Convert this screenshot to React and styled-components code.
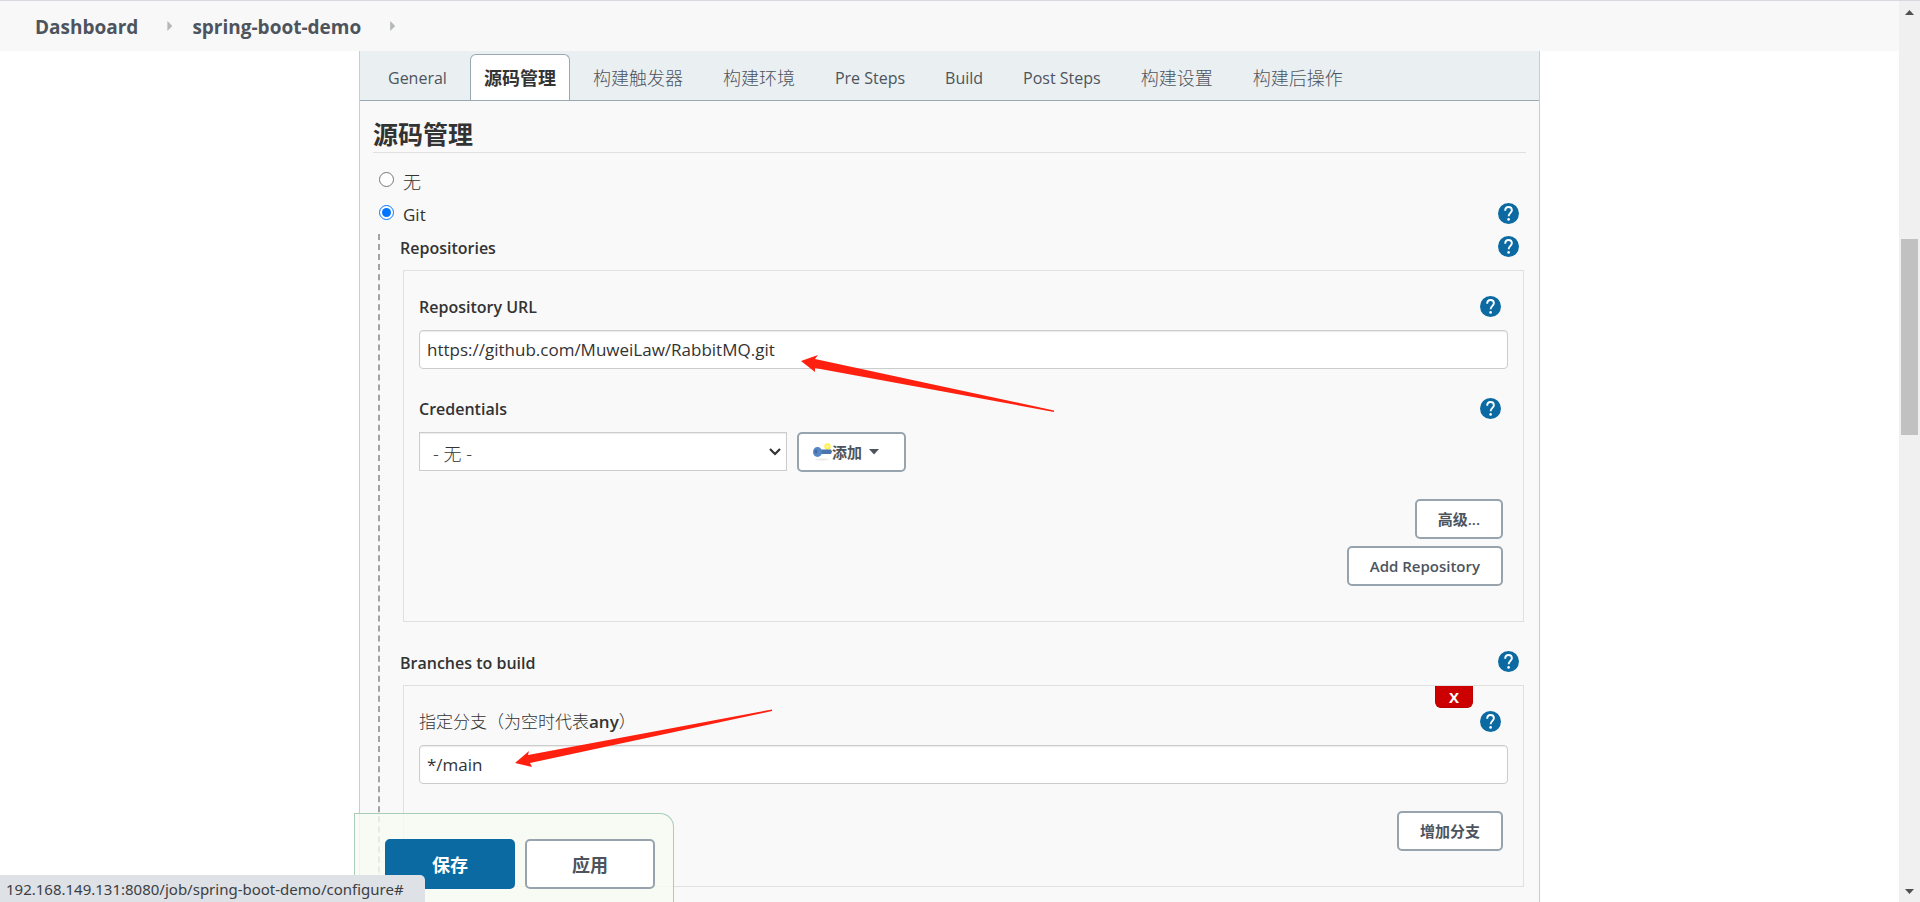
import React from "react";
import styled, { createGlobalStyle } from "styled-components";

const GlobalStyle = createGlobalStyle`
  *, *::before, *::after { box-sizing: border-box; }
  body {
    margin: 0;
    overflow: hidden;
    background: #fff;
    color: #333;
    font: 400 17px/24px "Open Sans", "Noto Sans CJK SC", sans-serif;
  }
  button, input, select { font: inherit; color: inherit; }
`;

const Page = styled.div`
  display: flex;
  height: 100vh;
  overflow: hidden;
`;

const Content = styled.div`
  flex: 1;
  min-width: 0;
  display: flex;
  flex-direction: column;
`;

const Breadcrumbs = styled.nav`
  flex: none;
  display: flex;
  align-items: center;
  height: 51px;
  padding: 2px 35px 0;
  background: #f8f8f8;
  border-top: 1px solid #d8d8de;
`;

const Crumb = styled.a`
  color: #4d545d;
  font-size: 19px;
  font-weight: 700;
  text-decoration: none;
`;

const Chevron = styled.span`
  width: 5px;
  height: 10px;
  margin: 0 20px 2px 29px;
  background: #b5b8ba;
  clip-path: polygon(0 0, 100% 50%, 0 100%);
`;

const Panel = styled.main`
  position: relative;
  flex: 1;
  min-height: 0;
  width: 100%;
  max-width: 1181px;
  margin: 0 auto;
  background: #f9f9f9;
  border: solid #ccc;
  border-width: 0 1px;
`;

const Tabs = styled.nav`
  display: flex;
  align-items: flex-end;
  height: 50px;
  padding-left: 11px;
  background: #eaeff2;
  border-bottom: 1px solid #98a9b4;
`;

const Tab = styled.a`
  height: 46px;
  margin: 0 6px 0 0;
  padding: 0 ${(p) => (p.$active ? 13 : 16)}px;
  border: 1px solid ${(p) => (p.$active ? "#98a9b4" : "transparent")};
  border-bottom: 0;
  border-radius: 6px 6px 0 0;
  background: ${(p) => (p.$active ? "#fff" : "transparent")};
  color: ${(p) => (p.$active ? "#333" : "#4d545d")};
  font-size: ${(p) => (p.$cjk ? 18 : 16)}px;
  font-weight: ${(p) => (p.$active ? 700 : p.$cjk ? 300 : 400)};
  line-height: 46px;
  text-decoration: none;
  white-space: nowrap;
`;

const Section = styled.section`
  padding: 14px 13px 0;
`;

const Title = styled.h2`
  margin: 0 0 11px;
  height: 38px;
  border-bottom: 1px solid #e0e0e0;
  font-size: 25px;
  line-height: 38px;
  font-weight: 700;
`;

const Row = styled.div`
  display: flex;
  align-items: center;
  height: ${(p) => (p.$group ? 25 : 33)}px;
  padding-left: ${(p) => (p.$option ? 6 : 0)}px;
  padding-right: 7px;
`;

const RadioLabel = styled.label`
  display: flex;
  align-items: center;
  gap: 9px;
  margin-right: auto;
  padding-top: 2px;
  font-size: ${(p) => (p.$cjk ? 18 : 17)}px;
  font-weight: ${(p) => (p.$cjk ? 300 : 400)};
`;

const Radio = styled.input`
  width: 15px;
  height: 15px;
  margin: 0 0 5px;
  accent-color: #0075ff;
`;

const FieldName = styled.label`
  margin-right: auto;
  padding-top: 1px;
  font-size: ${(p) => (p.$light ? 17 : 16)}px;
  font-weight: ${(p) => (p.$light ? 300 : 600)};
  b { font-weight: 600; }
`;

const GroupName = styled.span`
  margin-right: auto;
  padding-top: 2px;
  font-size: 16px;
  font-weight: 600;
`;

const HelpButton = styled.button`
  display: block;
  width: 21px;
  height: 21px;
  padding: 0;
  border: 0;
  background: none;
  svg { display: block; }
`;

const Nested = styled.div`
  margin: 4px 0 0 5px;
  padding-left: 20px;
  height: 1000px;
  border-left: 2px dashed #a3a3a3;
`;

const Box = styled.div`
  position: relative;
  margin: 11px 2px 27px 3px;
  padding: 19px 15px 35px;
  border: 1px solid #e0e0e0;
`;

const Field = styled.div`
  margin-bottom: 23px;
`;

const TextBox = styled.input`
  display: block;
  width: 100%;
  height: 39px;
  margin-top: 7px;
  padding: 1px 7px;
  border: 1px solid #ccc;
  border-radius: 4px;
  background: #fff;
  box-shadow: inset 0 1px 1px rgba(0, 0, 0, 0.08);
  outline: 0;
`;

const Inline = styled.div`
  display: flex;
  gap: 10px;
  margin-top: 7px;
`;

const SelectWrap = styled.span`
  position: relative;
  width: 368px;
  svg { position: absolute; right: 5px; top: 14px; pointer-events: none; }
`;

const Select = styled.select`
  width: 100%;
  height: 39px;
  padding: 5px 13px 0;
  appearance: none;
  border: 1px solid #ccc;
  border-radius: 0;
  background: #fff;
  box-shadow: inset 0 1px 1px rgba(0, 0, 0, 0.08);
  font-size: 18px;
  font-weight: 300;
`;

const Button = styled.button`
  display: flex;
  align-items: center;
  justify-content: center;
  height: 40px;
  padding: 0 21px;
  border: 2px solid #98a4ad;
  border-radius: 5px;
  background: #fff;
  color: #4d545d;
  font-size: 15px;
  font-weight: 600;
  white-space: nowrap;
`;

const AddButton = styled(Button)`
  width: 109px;
  justify-content: flex-start;
  padding: 0 13px;
  svg:last-child { margin-left: 7px; }
`;

const Actions = styled.div`
  display: flex;
  flex-direction: column;
  align-items: flex-end;
  gap: 7px;
  padding: 4px 5px 0 0;
`;

const Delete = styled.button`
  position: absolute;
  top: 0;
  right: 50px;
  width: 38px;
  height: 22px;
  padding: 0;
  border: 1px solid #b00;
  border-top: 0;
  border-radius: 0 0 6px 6px;
  background: #c00;
  color: #fff;
  font-size: 15px;
  font-weight: 700;
  line-height: 20px;
`;

const SaveBar = styled.div`
  position: absolute;
  left: -6px;
  bottom: 0;
  display: flex;
  gap: 10px;
  padding: 25px 18px 13px 30px;
  border: 1px solid #a9cdb9;
  border-bottom: 0;
  border-radius: 0 14px 0 0;
  background: rgba(247, 251, 242, 0.8);
`;

const BigButton = styled(Button)`
  width: 130px;
  height: 50px;
  padding-top: 2px;
  font-size: 18px;
  font-weight: 700;
  ${(p) => p.$primary && "background: #0b6aa2; border-color: #0b6aa2; color: #fff;"}
`;

const StatusBar = styled.div`
  position: fixed;
  left: 0;
  bottom: 0;
  height: 27px;
  min-width: 425px;
  padding: 0 10px 0 6px;
  border-radius: 0 5px 0 0;
  background: #dee1e6;
  color: #3c4043;
  font-family: "Noto Sans", sans-serif;
  font-size: 15px;
  line-height: 29px;
`;

const Scrollbar = styled.div`
  flex: none;
  display: flex;
  flex-direction: column;
  align-items: center;
  width: 21px;
  padding: 9px 2px 8px;
  background: #f0f0f0;
  border-top: 1px solid #d8d8de;
  svg { flex: none; }
`;

const Thumb = styled.div`
  width: 17px;
  height: 196px;
  margin: 224px 0 auto;
  background: #c1c1c1;
`;

const Annotations = styled.svg`
  position: absolute;
  left: 0;
  top: 0;
  pointer-events: none;
`;

const Help = ({ about }) => (
  <HelpButton type="button" aria-label={`Help for ${about}`}>
    <svg width="21" height="21" viewBox="0 0 21 21">
      <circle cx="10.5" cy="10.5" r="10.5" fill="#0b6aa2" />
      <path d="M7.2 7.7C7.2 5.5 8.5 4 10.5 4S13.900 5.400 13.900 7.300C13.900 9.700 10.600 10.200 10.600 13.300" fill="none" stroke="#fff" strokeWidth="1.9" />
      <circle cx="10.6" cy="16.4" r="1.3" fill="#fff" />
    </svg>
  </HelpButton>
);

const KeyIcon = () => (
  <svg width="20" height="20" viewBox="0 0 20 20">
    <ellipse cx="10" cy="17.5" rx="7" ry="1.2" fill="#ececec" />
    <circle cx="15.5" cy="4.5" r="3.2" fill="#fff04a" />
    <circle cx="15.5" cy="4.5" r="1.2" fill="#fffbc0" />
    <path d="M8 7.500h11l1 2-1 2.500h-9l-2 .5z" fill="#4a74ad" />
    <ellipse cx="5.500" cy="10" rx="4.500" ry="5" fill="#5686c4" />
    <ellipse cx="4" cy="9.500" rx="1.300" ry="2" fill="#3f689f" />
  </svg>
);

const tabs = [
  { name: "General" },
  { name: "源码管理", cjk: true, active: true },
  { name: "构建触发器", cjk: true },
  { name: "构建环境", cjk: true },
  { name: "Pre Steps" },
  { name: "Build" },
  { name: "Post Steps" },
  { name: "构建设置", cjk: true },
  { name: "构建后操作", cjk: true },
];

export default function App() {
  return (
    <Page>
      <GlobalStyle />
      <Content>
        <Breadcrumbs>
          <Crumb href="#">Dashboard</Crumb>
          <Chevron />
          <Crumb href="#">spring-boot-demo</Crumb>
          <Chevron />
        </Breadcrumbs>
        <Panel>
          <Tabs>
            {tabs.map((t) => (
              <Tab key={t.name} href="#" $active={t.active} $cjk={t.cjk}>{t.name}</Tab>
            ))}
          </Tabs>
          <Section>
            <Title>源码管理</Title>
            <Row $option>
              <RadioLabel $cjk><Radio type="radio" name="scm" />无</RadioLabel>
            </Row>
            <Row $option>
              <RadioLabel><Radio type="radio" name="scm" defaultChecked />Git</RadioLabel>
              <Help about="Git" />
            </Row>
            <Nested>
              <Row $group>
                <GroupName>Repositories</GroupName>
                <Help about="Repositories" />
              </Row>
              <Box>
                <Field>
                  <Row>
                    <FieldName htmlFor="url">Repository URL</FieldName>
                    <Help about="Repository URL" />
                  </Row>
                  <TextBox id="url" defaultValue="https://github.com/MuweiLaw/RabbitMQ.git" />
                </Field>
                <Field>
                  <Row>
                    <FieldName htmlFor="credentials">Credentials</FieldName>
                    <Help about="Credentials" />
                  </Row>
                  <Inline>
                    <SelectWrap>
                      <Select id="credentials"><option>- 无 -</option></Select>
                      <svg width="14" height="12" viewBox="0 0 14 12">
                        <path d="M2 3l5 5 5-5" fill="none" stroke="#333" strokeWidth="2.2" />
                      </svg>
                    </SelectWrap>
                    <AddButton type="button">
                      <KeyIcon />
                      添加
                      <svg width="10" height="6" viewBox="0 0 10 6"><path d="M0 0h10L5 5.500z" fill="#4d545d" /></svg>
                    </AddButton>
                  </Inline>
                </Field>
                <Actions>
                  <Button type="button">高级...</Button>
                  <Button type="button">Add Repository</Button>
                </Actions>
              </Box>
              <Row $group>
                <GroupName>Branches to build</GroupName>
                <Help about="Branches to build" />
              </Row>
              <Box>
                <Delete type="button">X</Delete>
                <Field>
                  <Row>
                    <FieldName htmlFor="branch" $light>指定分支（为空时代表<b>any</b>）</FieldName>
                    <Help about="branch" />
                  </Row>
                  <TextBox id="branch" defaultValue="*/main" />
                </Field>
                <Actions>
                  <Button type="button">增加分支</Button>
                </Actions>
              </Box>
            </Nested>
          </Section>
          <Annotations width="760" height="760" viewBox="360 51 760 760">
            <path d="M801 361L818 355L815 359L1054 410.500V412L815 368L815 372Z" fill="#ff2010" />
            <path d="M515 763L529 751L528 755L772 709.500V711L530 763L532 767Z" fill="#ff2010" />
          </Annotations>
          <SaveBar>
            <BigButton type="button" $primary>保存</BigButton>
            <BigButton type="button">应用</BigButton>
          </SaveBar>
        </Panel>
      </Content>
      <Scrollbar aria-hidden="true">
        <svg width="9" height="5" viewBox="0 0 9 5"><path d="M0 5L4.500 0L9 5z" fill="#505050" /></svg>
        <Thumb />
        <svg width="9" height="5" viewBox="0 0 9 5"><path d="M0 0h9L4.500 5z" fill="#505050" /></svg>
      </Scrollbar>
      <StatusBar>192.168.149.131:8080/job/spring-boot-demo/configure#</StatusBar>
    </Page>
  );
}
